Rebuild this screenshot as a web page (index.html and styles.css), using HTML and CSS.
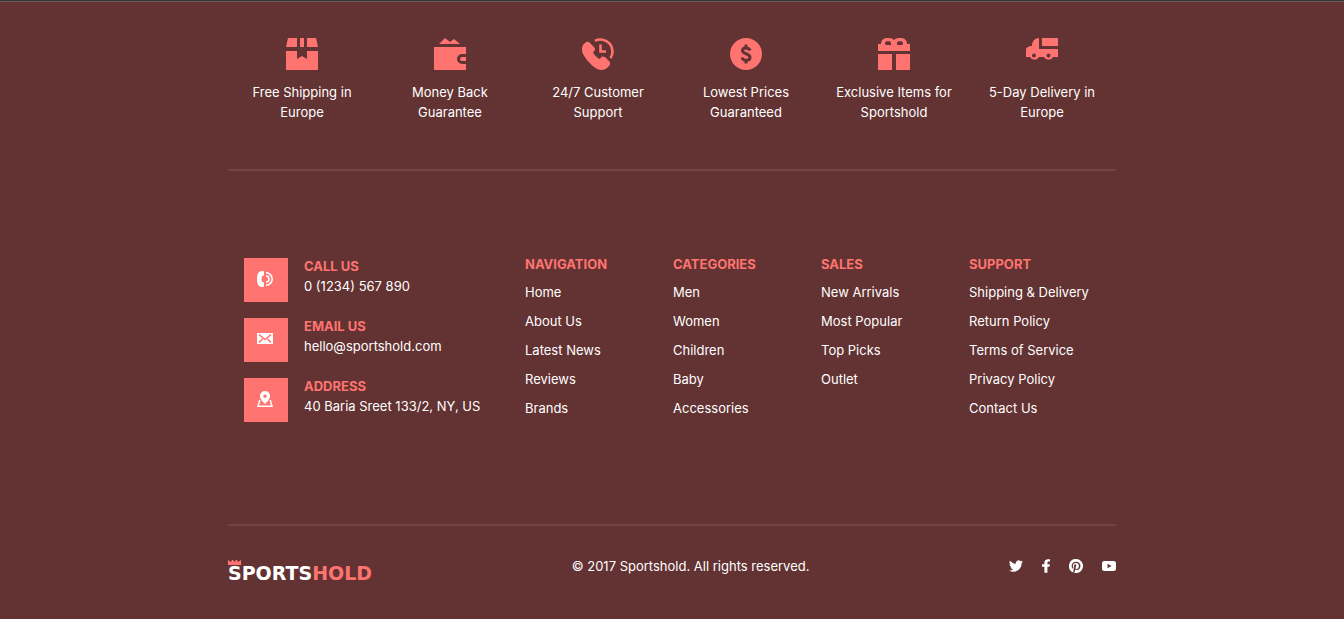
FILE: index.html
```html
<!DOCTYPE html>
<html lang="en">
<head>
<meta charset="utf-8">
<meta name="viewport" content="width=device-width, initial-scale=1">
<title>Sportshold</title>
<link rel="stylesheet" href="styles.css">
</head>
<body>
<footer class="footer">
  <div class="container">
    <ul class="features">
      <li class="feature">
        <svg class="feature-icon" viewBox="0 0 32 32" aria-hidden="true"><path d="M2 0H11V9H0ZM14 0H18V9H14ZM21 0H30L32 9H21ZM0 13H11V21L16 18L21 21V13H32V32H0Z"/></svg>
        <span class="feature-text">Free Shipping in Europe</span>
      </li>
      <li class="feature">
        <svg class="feature-icon" viewBox="0 0 32 32" aria-hidden="true"><path d="M5 6L11 0L16 4L20 1L26 6ZM0 9H32V16H28A5 5 0 0 0 28 26H32V32H0ZM32 19V23H28A2 2 0 0 1 28 19Z"/></svg>
        <span class="feature-text">Money Back Guarantee</span>
      </li>
      <li class="feature">
        <svg class="feature-icon" viewBox="0 0 32 32" aria-hidden="true"><path d="M3 5C5 3 7 4 8 5L12 9C14 11 13 13 11 14C12 17 15 20 18 21C19 18 21 18 23 19L27 23C29 25 28 27 27 28C23 33 17 33 12 29C8 26 3 20 1 16C-1 11 0 7 3 5Z"/><path class="line" d="M13 2.800A12 12 0 0 1 28.500 20.100"/><path class="line" d="M18.500 6.500V13.500H24"/></svg>
        <span class="feature-text">24/7 Customer Support</span>
      </li>
      <li class="feature">
        <svg class="feature-icon" viewBox="0 0 32 32" aria-hidden="true"><circle cx="16" cy="16" r="16"/><path class="cutline" d="M16 6.500V10M16 22V25.500M20 12.500C19 9 12.500 9 12.500 12.500C12.500 16.500 20 15 20 19.500C20 23 13 23.500 12 19.500"/></svg>
        <span class="feature-text">Lowest Prices Guaranteed</span>
      </li>
      <li class="feature">
        <svg class="feature-icon" viewBox="0 0 32 32" aria-hidden="true"><path fill-rule="evenodd" d="M0 6H3C3 2 6 0 9 0C12 0 14 0 16 2C18 0 20 0 23 0C26 0 29 2 29 6H32V13H0ZM8 3.500A2 2 0 0 0 8 7H13V5.500C13 3 11 3 8 3.500ZM19 7H24A2 2 0 0 0 24 3.500C21 3 19 3 19 5.500ZM0 16H14V32H0ZM18 16H32V32H18Z"/></svg>
        <span class="feature-text">Exclusive Items for Sportshold</span>
      </li>
      <li class="feature">
        <svg class="feature-icon" viewBox="0 0 32 32" aria-hidden="true"><path fill-rule="evenodd" d="M16 0H32V8H16ZM13 0V11H32V19H27A5 5 0 0 1 18 19H13A5 5 0 0 1 4 19H0V12C0 9 3 8 6 8C6 3 9 0 13 0ZM8 15.500A2 2 0 1 0 8 19.500A2 2 0 1 0 8 15.500ZM22.500 15.500A2 2 0 1 0 22.500 19.500A2 2 0 1 0 22.500 15.500Z"/></svg>
        <span class="feature-text">5-Day Delivery in Europe</span>
      </li>
    </ul>

    <div class="directory">
      <address class="contacts">
        <div class="contact">
          <span class="contact-badge"><svg class="contact-icon" viewBox="0 0 16 16" aria-hidden="true"><path d="M5 0C1 0 0 4 0 8S1 16 5 16H6Q7 16 7 15V12Q7 11 6 11H5Q4 8 5 5H6Q7 5 7 4V1Q7 0 6 0Z"/><path class="thin" d="M9 1.800A6.200 6.200 0 0 1 9 14.200M9 5A3 3 0 0 1 9 11"/></svg></span>
          <div><h2 class="heading">Call us</h2><p class="contact-text">0 (1234) 567 890</p></div>
        </div>
        <div class="contact">
          <span class="contact-badge"><svg class="contact-icon" viewBox="0 0 16 16" aria-hidden="true"><path d="M0 2H16V13H0Z"/><path class="envelope-line" d="M2 3.500L8 8.500L14 3.500M2 11.500L5.500 8M14 11.500L10.500 8"/></svg></span>
          <div><h2 class="heading">Email us</h2><p class="contact-text">hello@sportshold.com</p></div>
        </div>
        <div class="contact">
          <span class="contact-badge"><svg class="contact-icon" viewBox="0 0 16 16" aria-hidden="true"><path fill-rule="evenodd" d="M8 0A5 5 0 0 1 13 5C13 8 10 11 8 13C6 11 3 8 3 5A5 5 0 0 1 8 0ZM8 3.500A1.700 1.700 0 1 0 8 7A1.700 1.700 0 1 0 8 3.500Z"/><path d="M2 9H3.500L2 14.500H14L12.500 9H14L16 16H0Z"/></svg></span>
          <div><h2 class="heading">Address</h2><p class="contact-text">40 Baria Sreet 133/2, NY, US</p></div>
        </div>
      </address>
      <nav class="links" aria-labelledby="nav-navigation">
        <h2 class="heading" id="nav-navigation">Navigation</h2>
        <a href="#">Home</a><a href="#">About Us</a><a href="#">Latest News</a><a href="#">Reviews</a><a href="#">Brands</a>
      </nav>
      <nav class="links" aria-labelledby="nav-categories">
        <h2 class="heading" id="nav-categories">Categories</h2>
        <a href="#">Men</a><a href="#">Women</a><a href="#">Children</a><a href="#">Baby</a><a href="#">Accessories</a>
      </nav>
      <nav class="links" aria-labelledby="nav-sales">
        <h2 class="heading" id="nav-sales">Sales</h2>
        <a href="#">New Arrivals</a><a href="#">Most Popular</a><a href="#">Top Picks</a><a href="#">Outlet</a>
      </nav>
      <nav class="links" aria-labelledby="nav-support">
        <h2 class="heading" id="nav-support">Support</h2>
        <a href="#">Shipping &amp; Delivery</a><a href="#">Return Policy</a><a href="#">Terms of Service</a><a href="#">Privacy Policy</a><a href="#">Contact Us</a>
      </nav>
    </div>

    <div class="bottom">
      <a class="logo" href="#">
        <svg class="crown" viewBox="0 0 13 5" aria-hidden="true"><path d="M0 0L3 2L4 0H5L6.500 2L8 0H9L10 2L13 0V5H0Z"/></svg>
        <span class="wordmark">SPORTS<span class="wordmark-accent">HOLD</span></span>
      </a>
      <p class="copyright">© 2017 Sportshold. All rights reserved.</p>
      <div class="social">
        <a href="#" aria-label="Twitter"><svg class="social-icon" viewBox="0 0 24 24" aria-hidden="true"><path d="M24 4.600a10 10 0 0 1-2.800.8 5 5 0 0 0 2.100-2.700 10 10 0 0 1-3.100 1.200 4.900 4.900 0 0 0-8.400 4.500A14 14 0 0 1 1.700 3.200a4.900 4.900 0 0 0 1.500 6.500 5 5 0 0 1-2.200-.6 4.900 4.900 0 0 0 3.900 4.900 5 5 0 0 1-2.200.1 4.900 4.900 0 0 0 4.600 3.400A10 10 0 0 1 0 19.500 14 14 0 0 0 21.500 7.100 10 10 0 0 0 24 4.600Z"/></svg></a>
        <a href="#" aria-label="Facebook"><svg class="social-icon narrow" viewBox="0 0 14 24" aria-hidden="true"><path d="M13 13.500L13.700 9H9.500V6.300C9.500 5 10 4 12 4H14V.3C13 .1 11.500 0 10.500 0C6.500 0 4.200 2.300 4.200 5.800V9H0V13.500H4.200V24H9.500V13.500Z"/></svg></a>
        <a href="#" aria-label="Pinterest"><svg class="social-icon" viewBox="0 0 24 24" aria-hidden="true"><path d="M12 0a12 12 0 0 0-4.400 23.200c-.1-1-.2-2.400 0-3.400l1.400-6s-.3-.7-.3-1.700c0-1.700 1-2.900 2.200-2.900 1 0 1.500.8 1.500 1.700 0 1-.6 2.600-1 4-.3 1.200.6 2.200 1.800 2.200 2.100 0 3.800-2.300 3.800-5.500 0-2.900-2.100-4.900-5-4.900a5.200 5.200 0 0 0-5.400 5.200c0 1 .4 2.100.9 2.700l.1.300-.3 1.400c0 .2-.2.300-.4.200-1.500-.7-2.400-2.900-2.400-4.600 0-3.800 2.700-7.200 7.900-7.200 4.100 0 7.300 2.900 7.300 6.900 0 4.100-2.600 7.400-6.100 7.400-1.200 0-2.300-.6-2.700-1.400l-.7 2.800c-.3 1-1 2.300-1.500 3.100A12 12 0 1 0 12 0Z"/></svg></a>
        <a href="#" aria-label="YouTube"><svg class="social-icon" viewBox="0 0 24 24" aria-hidden="true"><path fill-rule="evenodd" d="M4 3.500H20Q24 3.500 24 7.500V16.500Q24 20.500 20 20.500H4Q0 20.500 0 16.500V7.500Q0 3.500 4 3.500ZM9.500 8V16L16.500 12Z"/></svg></a>
      </div>
    </div>
  </div>
</footer>
</body>
</html>
```
FILE: styles.css
```css
:root {
  --bg: #633232;
  --accent: #ff7470;
  --rule: #754343;
}

* { box-sizing: border-box; }

body {
  margin: 0;
  background: var(--bg);
  color: #fff;
  font-family: Inter, "Open Sans", sans-serif;
  font-size: 13px;
  line-height: 20px;
}

h2, p, ul { margin: 0; padding: 0; }
a { color: inherit; text-decoration: none; }
svg { display: block; fill: currentColor; }

.footer {
  border-top: 1px solid #343437;
  box-shadow: inset 0 1px #6b605d;
  padding: 37px 16px 32px;
}

.container { max-width: 888px; margin: 0 auto; }

.features {
  display: grid;
  grid-template-columns: repeat(6, 1fr);
  list-style: none;
  padding-bottom: 47px;
  border-bottom: 2px solid var(--rule);
}

.feature {
  display: flex;
  flex-direction: column;
  align-items: center;
  gap: 12px;
  padding: 0 12px;
  text-align: center;
}

.feature-icon { width: 32px; height: 32px; color: var(--accent); }
.line { fill: none; stroke: currentColor; stroke-width: 2.6; }
.cutline { fill: none; stroke: var(--bg); stroke-width: 3; }

.directory {
  display: grid;
  grid-template-columns: 2fr repeat(4, 1fr);
  padding: 83px 0 101px;
  border-bottom: 2px solid var(--rule);
}

.heading {
  color: var(--accent);
  font-size: 13px;
  font-weight: 700;
  line-height: 20px;
  text-transform: uppercase;
}

.contacts {
  display: flex;
  flex-direction: column;
  gap: 16px;
  padding: 4px 0 0 16px;
  font-style: normal;
}

.contact { display: flex; gap: 16px; }
.contact .heading { line-height: 16px; }

.contact-badge {
  display: flex;
  flex: none;
  align-items: center;
  justify-content: center;
  width: 44px;
  height: 44px;
  padding: 0 2px 2px 0;
  background: var(--accent);
}

.contact-icon { width: 16px; height: 16px; }
.thin { fill: none; stroke: currentColor; stroke-width: 1.6; }
.envelope-line { fill: none; stroke: var(--accent); stroke-width: 1.6; }
.contact-text { line-height: 24px; }

.links {
  display: flex;
  flex-direction: column;
  line-height: 29px;
  padding-left: 1px;
}

.links .heading { margin-bottom: 4px; }

.bottom {
  display: flex;
  align-items: flex-start;
  justify-content: space-between;
  padding-top: 30px;
}

.logo { padding-top: 4px; }
.crown { width: 13px; height: 5px; color: var(--accent); }

.wordmark {
  display: block;
  font-family: "DejaVu Sans", sans-serif;
  font-size: 19px;
  font-weight: 700;
  line-height: 16px;
}

.wordmark-accent { color: var(--accent); }

.social { display: flex; align-items: center; gap: 19px; height: 20px; }
.social-icon { width: 14px; height: 14px; }
.narrow { width: 8px; }
```
